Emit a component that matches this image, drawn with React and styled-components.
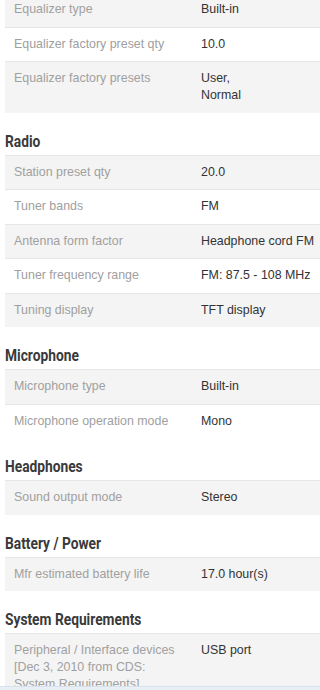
import styled, { createGlobalStyle } from "styled-components";

const GlobalStyle = createGlobalStyle`
  html, body {
    margin: 0;
    padding: 0;
    background: #fff;
  }
  body {
    font-family: "Liberation Sans", Arial, sans-serif;
    overflow: hidden;
  }
`;

const Page = styled.div`
  width: 320px;
  height: 690px;
  overflow: hidden;
  padding-left: 5px;
  box-sizing: border-box;
`;

const Section = styled.section`
  margin-top: ${(p) => (p.$first ? "-8px" : "19px")};
`;

// condensed heading look, squeezed from Roboto bold
const Heading = styled.h3`
  margin: 0 0 3px;
  font-family: Roboto, "Liberation Sans", sans-serif;
  font-weight: 700;
  font-size: 16px;
  line-height: 20px;
  color: #3a3a3a;
  white-space: nowrap;
  transform: scaleX(0.86);
  transform-origin: left center;
`;

const Table = styled.div`
  display: flex;
  flex-direction: column;
`;

const Row = styled.div`
  display: grid;
  grid-template-columns: 187px 1fr;
  border-top: 1px solid #e6e6e6;
  background: ${(p) => (p.$odd ? "#f4f4f4" : "#fff")};
  font-size: 12.4px;
  line-height: 17px;
  padding: 8.25px 0;
`;

const Label = styled.div`
  padding: 0 10px 0 9px;
  color: #a0a0a0;
`;

const Value = styled.div`
  padding-left: 9px;
  color: #333;
  white-space: pre-line;
`;

const BottomBar = styled.div`
  position: fixed;
  left: 0;
  right: 0;
  bottom: 0;
  height: 3px;
  background: #e9eff6;
  border-top: 1px solid #d6e1ec;
`;

const sections = [
  {
    title: null,
    rows: [
      ["Equalizer type", "Built-in"],
      ["Equalizer factory preset qty", "10.0"],
      ["Equalizer factory presets", "User,\nNormal"],
    ],
  },
  {
    title: "Radio",
    rows: [
      ["Station preset qty", "20.0"],
      ["Tuner bands", "FM"],
      ["Antenna form factor", "Headphone cord FM"],
      ["Tuner frequency range", "FM: 87.5 - 108 MHz"],
      ["Tuning display", "TFT display"],
    ],
  },
  {
    title: "Microphone",
    rows: [
      ["Microphone type", "Built-in"],
      ["Microphone operation mode", "Mono"],
    ],
  },
  {
    title: "Headphones",
    rows: [["Sound output mode", "Stereo"]],
  },
  {
    title: "Battery / Power",
    rows: [["Mfr estimated battery life", "17.0 hour(s)"]],
  },
  {
    title: "System Requirements",
    rows: [
      [
        "Peripheral / Interface devices [Dec 3, 2010 from CDS: System Requirements]",
        "USB port",
      ],
    ],
  },
];

const App = () => {
  return (
    <>
      <GlobalStyle />
      <Page>
        {sections.map((section, i) => (
          <Section key={i} $first={i === 0}>
            {section.title && <Heading>{section.title}</Heading>}
            <Table>
              {section.rows.map(([label, value], j) => (
                <Row key={label} $odd={j % 2 === 0}>
                  <Label>{label}</Label>
                  <Value>{value}</Value>
                </Row>
              ))}
            </Table>
          </Section>
        ))}
      </Page>
      <BottomBar />
    </>
  );
};

export default App;
